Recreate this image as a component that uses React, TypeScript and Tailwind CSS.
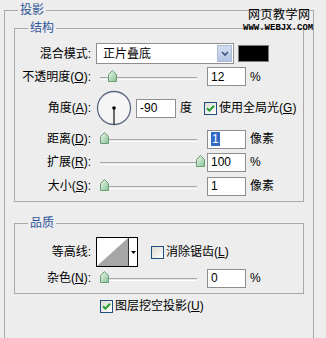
import type { ReactNode } from "react";

const font = "font-['Liberation_Sans','Noto_Sans_CJK_SC',sans-serif]";

const Key = ({ k }: { k: string }) => (
  <>
    (<span className="underline underline-offset-[1px]">{k}</span>)
  </>
);

const Thumb = () => (
  <svg width="9" height="12" viewBox="0 0 9 12">
    <defs>
      <linearGradient id="thumbFill" x1="0" y1="0" x2="1" y2="1">
        <stop offset="0" stopColor="#eef8ef" />
        <stop offset="1" stopColor="#86c093" />
      </linearGradient>
    </defs>
    <path d="M0.5 4.5 L4.5 0.5 L8.5 4.5 V11.5 H0.5 Z" fill="url(#thumbFill)" stroke="#6b9c77" />
  </svg>
);

// thumb offset in px from slider start (0 = far left, 96 = far right)
const Slider = ({ pos }: { pos: number }) => (
  <div className="relative w-[108px] h-[14px]">
    <div className="absolute left-[4px] right-[7px] top-[7px] h-[3px] border-t border-[#a8a8a8] border-b border-b-white bg-[#e6e6e6]" />
    <div className="absolute top-[0px]" style={{ left: 4 + pos }}>
      <Thumb />
    </div>
  </div>
);

const Field = ({ children }: { children: ReactNode }) => (
  <div className="ml-[3px] w-[39px] h-[19px] border border-[#8e8e8e] bg-white flex items-center pl-[3px] text-[12px] leading-none text-black">
    {children}
  </div>
);

const Check = ({ on }: { on: boolean }) => (
  <div className="w-[13px] h-[13px] border border-[#1f4f7f] bg-gradient-to-br from-[#dedbd0] to-white flex items-center justify-center">
    {on && (
      <svg width="9" height="9" viewBox="0 0 9 9">
        <path d="M1 4.2 L3.4 6.6 L8 1.8" fill="none" stroke="#22a12f" strokeWidth="2" />
      </svg>
    )}
  </div>
);

const Label = ({ children }: { children: ReactNode }) => (
  <div className="w-[77px] text-right pr-[1px] text-[12px] leading-none text-black whitespace-nowrap">{children}</div>
);

const Row = ({ h, label, children }: { h: string; label: ReactNode; children: ReactNode }) => (
  <div className={`flex items-center ${h}`}>
    <Label>{label}</Label>
    <div className="ml-[4px] flex items-center">{children}</div>
  </div>
);

const Unit = ({ children }: { children: ReactNode }) => (
  <span className="ml-[4px] text-[12px] leading-none text-black">{children}</span>
);

export default function App() {
  return (
    <div className={`relative w-[326px] h-[338px] overflow-hidden bg-[#ededed] pt-[3px] pl-[4px] ${font}`}>
      <fieldset className="w-[310px] h-[360px] border border-b-0 border-[#a9a9a9] px-[9px]">
        <legend className="ml-[4px] px-[2px] text-[12px] leading-[14px] text-[#2f5699]">投影</legend>

        <fieldset className="mt-[4px] border border-[#a9a9a9] pt-[7px] pb-[3px]">
          <legend className="ml-[13px] px-[2px] text-[12px] leading-[14px] text-[#2f5699]">结构</legend>

          <Row h="h-[23px]" label="混合模式:">
            <div className="w-[138px] h-[21px] border border-[#8e8e8e] bg-white flex">
              <div className="flex-1 pl-[6px] flex items-center text-[12px] leading-none">正片叠底</div>
              <div className="w-[15px] m-[1px] bg-gradient-to-b from-[#d3def0] to-[#b4c5e3] border border-[#aebbd4] flex items-center justify-center">
                <svg width="8" height="6" viewBox="0 0 8 6">
                  <path d="M1 1 L4 4 L7 1" fill="none" stroke="#3f557e" strokeWidth="1.6" />
                </svg>
              </div>
            </div>
            <div className="ml-[4px] w-[31px] h-[17px] bg-black border border-[#7d7d7d]" />
          </Row>

          <Row h="h-[23px]" label={<>不透明度<Key k="O" />:</>}>
            <Slider pos={8} />
            <Field>12</Field>
            <Unit>%</Unit>
          </Row>

          <Row h="h-[40px]" label={<>角度<Key k="A" />:</>}>
            <svg width="36" height="36" viewBox="0 0 36 36">
              <circle cx="18" cy="18" r="16.5" fill="#f5f5f5" stroke="#5d6982" strokeWidth="1.3" />
              <line x1="18" y1="18" x2="18" y2="34.5" stroke="#111" strokeWidth="1.2" />
              <circle cx="18" cy="18" r="1.8" fill="#000" />
            </svg>
            <div className="ml-[4px] w-[40px] h-[19px] border border-[#8e8e8e] bg-white flex items-center pl-[3px] text-[12px] leading-none">-90</div>
            <Unit>度</Unit>
            <div className="ml-[12px]">
              <Check on />
            </div>
            <span className="ml-[2px] text-[12px] leading-none">使用全局光<Key k="G" /></span>
          </Row>

          <Row h="h-[22px]" label={<>距离<Key k="D" />:</>}>
            <Slider pos={0} />
            <Field>
              <span className="bg-[#316ac5] text-white px-[1px] leading-[14px]">1</span>
            </Field>
            <Unit>像素</Unit>
          </Row>

          <Row h="h-[24px]" label={<>扩展<Key k="R" />:</>}>
            <Slider pos={96} />
            <Field>100</Field>
            <Unit>%</Unit>
          </Row>

          <Row h="h-[24px]" label={<>大小<Key k="S" />:</>}>
            <Slider pos={0} />
            <Field>1</Field>
            <Unit>像素</Unit>
          </Row>
        </fieldset>

        <fieldset className="mt-[14px] border border-[#a9a9a9] pt-[7px] pb-[4px]">
          <legend className="ml-[13px] px-[2px] text-[12px] leading-[14px] text-[#2f5699]">品质</legend>

          <Row h="h-[30px]" label="等高线:">
            <div className="w-[42px] h-[30px] border border-black bg-white flex">
              <svg width="31" height="28" viewBox="0 0 31 28" className="shrink-0">
                <path d="M0 28 L31 0 L31 28 Z" fill="#a6a6a6" />
              </svg>
              <div className="flex-1 border-l border-[#333] flex items-center justify-center">
                <svg width="5" height="3" viewBox="0 0 5 3">
                  <path d="M0 0 H5 L2.5 3 Z" fill="#000" />
                </svg>
              </div>
            </div>
            <div className="ml-[13px]">
              <Check on={false} />
            </div>
            <span className="ml-[2px] text-[12px] leading-none">消除锯齿<Key k="L" /></span>
          </Row>

          <Row h="h-[22px]" label={<>杂色<Key k="N" />:</>}>
            <Slider pos={0} />
            <Field>0</Field>
            <Unit>%</Unit>
          </Row>
        </fieldset>

        <div className="mt-[5px] h-[14px] flex items-center pl-[86px]">
          <Check on />
          <span className="ml-[2px] text-[12px] leading-none">图层挖空投影<Key k="U" /></span>
        </div>
      </fieldset>

      <div className="absolute top-[9px] left-[248px] text-[12px] leading-none tracking-[0.5px] text-black">网页教学网</div>
      <div className="absolute top-[24px] left-[243px] font-['Liberation_Mono',monospace] font-bold text-[9px] leading-none text-black">
        WWW.WEBJX.COM
      </div>
    </div>
  );
}
